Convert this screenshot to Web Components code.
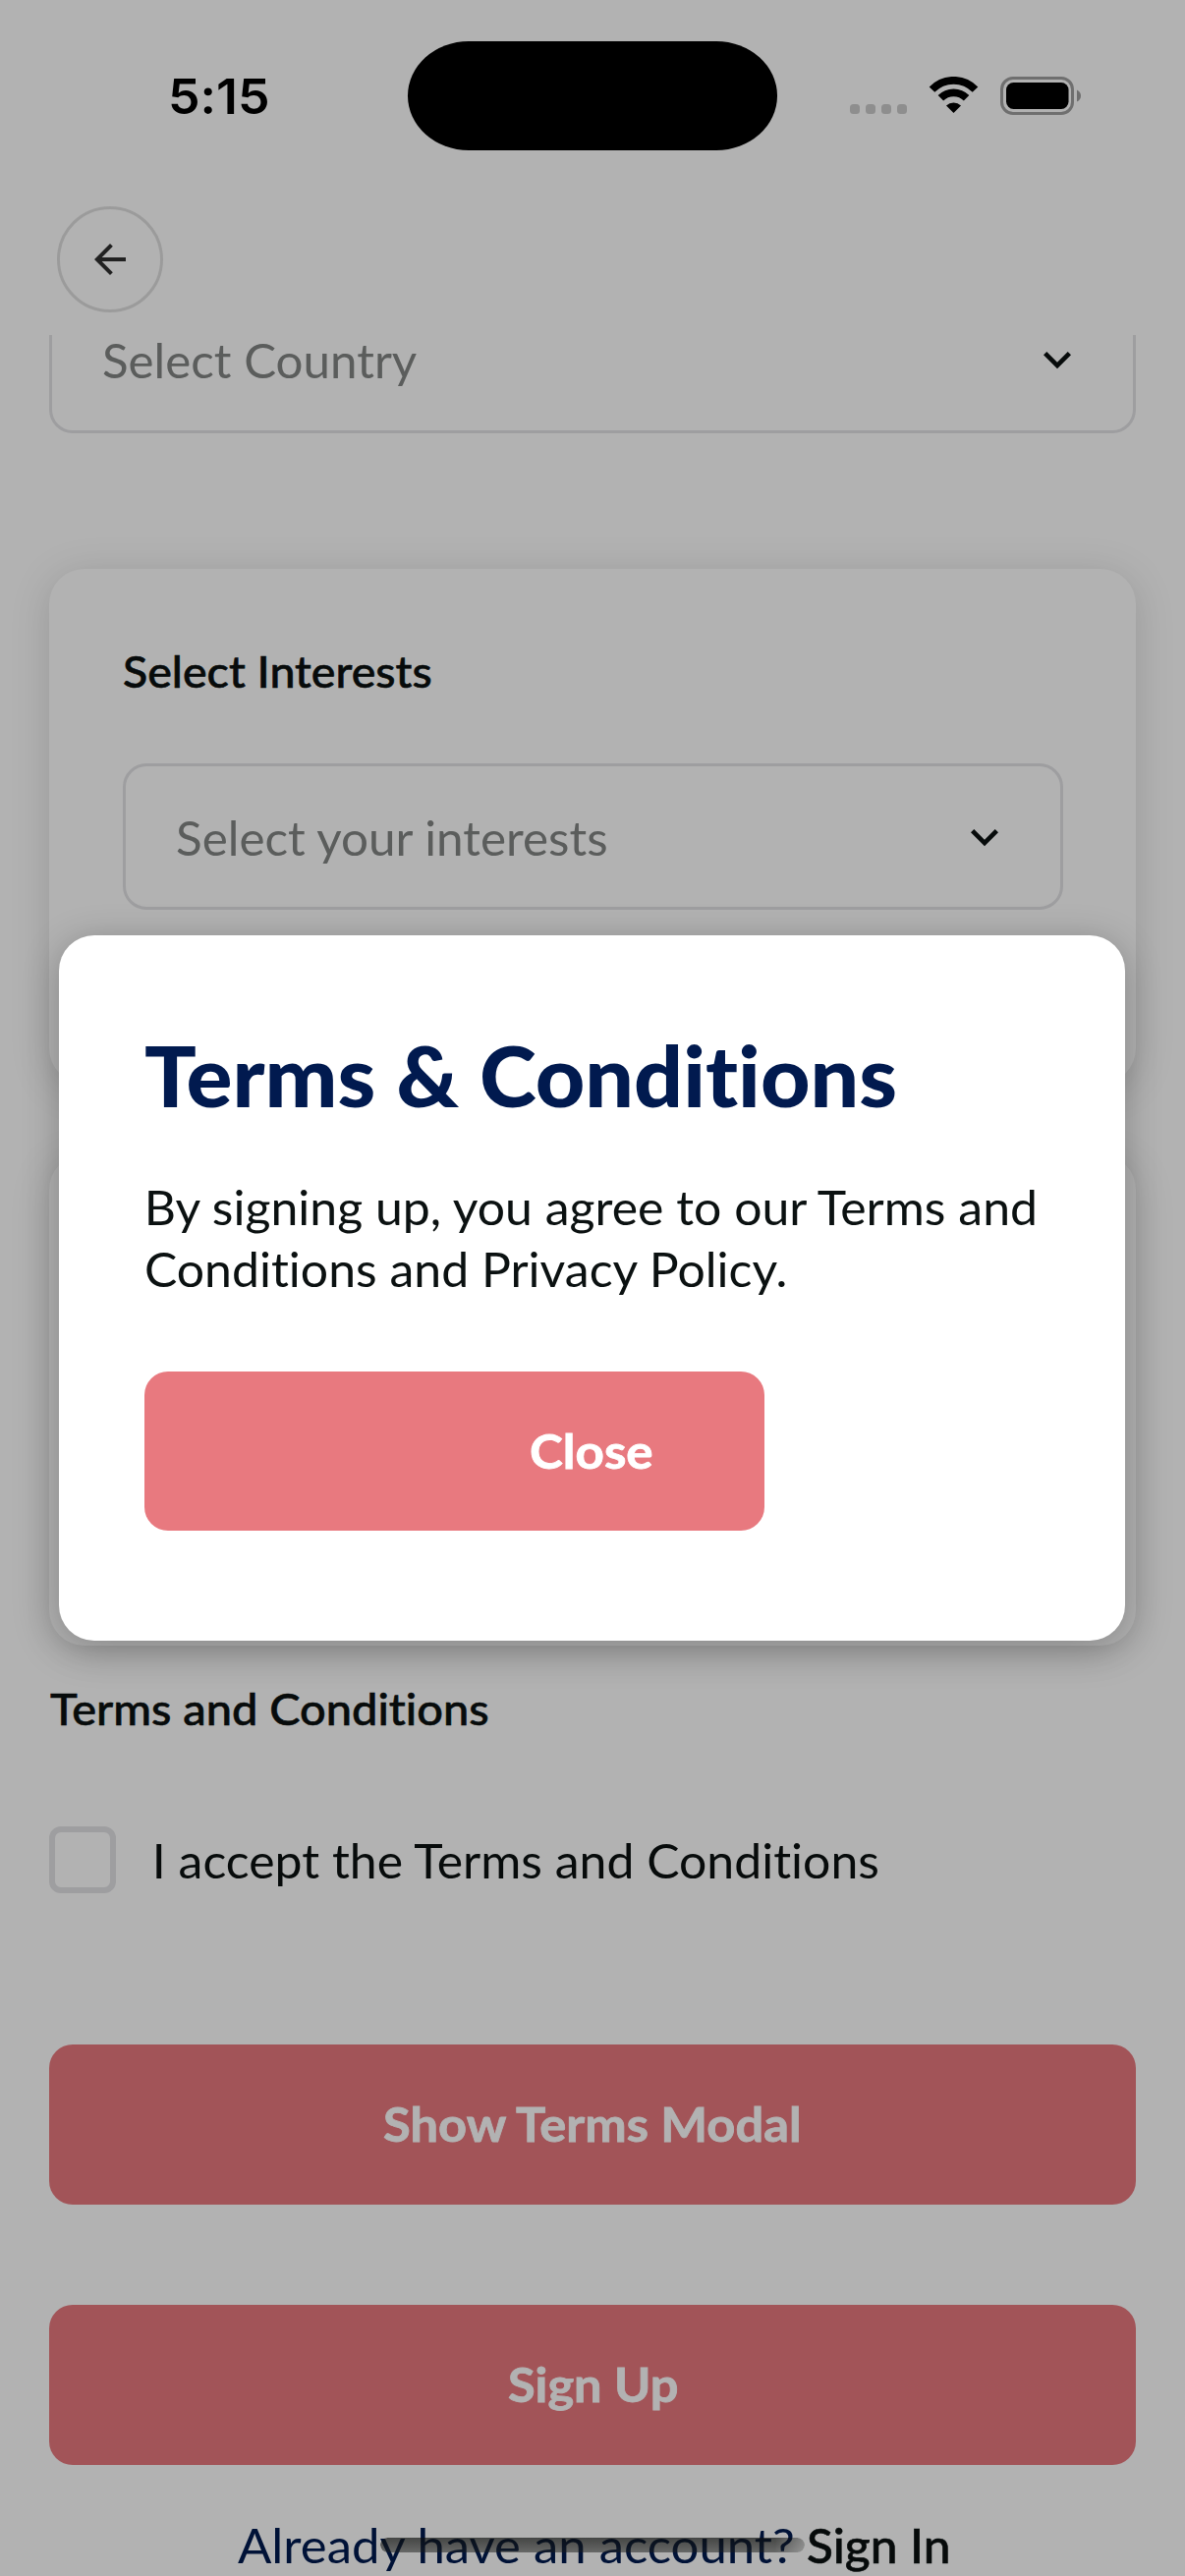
<!DOCTYPE html>
<html lang="en">
<head>
<meta charset="utf-8">
<title>Sign Up</title>
<style>
html,body{margin:0;padding:0;background:#fff}
body{width:1206px;height:2622px;overflow:hidden;font-family:Lato,"Open Sans",sans-serif}
</style>
</head>
<body>
<signup-screen></signup-screen>
<script>
const define = (name, html, init) => customElements.define(name, class extends HTMLElement {
  connectedCallback() {
    if (this.shadowRoot) return;
    const t = document.createElement('template');
    t.innerHTML = html;
    this.attachShadow({mode: 'open'}).append(t.content.cloneNode(true));
    if (init) init(this, this.shadowRoot);
  }
});

/* One line of type whose drawn width is set by the "ink" attribute. */
const pen = document.createElement('canvas').getContext('2d');
define('type-line', `<style>
:host{display:block;flex:none;height:1em;line-height:1em;font-size:48px;white-space:nowrap}
span{display:inline-block;transform-origin:0 0;line-height:1em;letter-spacing:.01px;font-variant-ligatures:none}
</style><span><slot></slot></span>`, (el, root) => {
  const cs = getComputedStyle(el), span = root.querySelector('span');
  pen.font = cs.fontWeight + ' ' + cs.fontSize + ' ' + cs.fontFamily;
  pen.letterSpacing = '0.01px';
  const m = pen.measureText(el.textContent);
  const ink = +el.getAttribute('ink');
  const s = ink / (m.actualBoundingBoxRight + m.actualBoundingBoxLeft);
  el.style.width = ink + 'px';
  span.style.transform = `translate(${m.actualBoundingBoxLeft * s}px,1px) scaleX(${s})`;
});

define('status-bar', `<style>
:host{display:flex;align-items:center;height:194px;flex:none;color:#000}
.side{flex:none;width:415px;display:flex;align-items:center;box-sizing:border-box}
.time{padding-left:174px}
.time type-line{font:600 50px Inter,sans-serif;line-height:1em}
.island{width:376px;height:111px;background:#000;border-radius:62px/55.5px;flex:none}
.right{padding-left:74px}
.dots{display:flex;gap:6px;padding-top:28px}
.dots i{width:10px;height:10px;border-radius:3.5px;background:#ccc}
svg{display:block}
.wifi{margin-left:22px}.bat{margin-left:22px}
</style>
<div class="side time"><type-line ink="98">5:15</type-line></div>
<div class="island"></div>
<div class="side right">
 <div class="dots"><i></i><i></i><i></i><i></i></div>
 <svg class="wifi" width="51" height="38" viewBox="0 0 51 38"><g fill="none" stroke="#000" stroke-width="7.7"><path d="M3.5 13.2A30.4 30.4 0 0 1 47.5 13.2"/><path d="M12.4 21.8A18.4 18.4 0 0 1 38.6 21.8"/></g><path d="M25.5 37L18 29.4A10.9 10.9 0 0 1 33 29.4Z"/></svg>
 <svg class="bat" width="83" height="39" viewBox="0 0 83 39"><rect x="1.5" y="1.5" width="72" height="36" rx="11.5" fill="none" stroke="#9f9f9f" stroke-width="3"/><rect x="6" y="6" width="63.5" height="27" rx="7.5"/><path d="M78 13.5Q82 15.5 82 19.5T78 25.5Z" fill="#9f9f9f"/></svg>
</div>`);

define('back-button', `<style>
:host{display:flex;align-items:center;justify-content:center;box-sizing:border-box;width:108px;height:108px;border:3px solid #dfdfdf;border-radius:50%}
svg{display:block}
</style><svg width="48" height="48" viewBox="0 0 24 24" fill="#303030"><path d="M20 11H7.83l5.59-5.59L12 4l-8 8 8 8 1.41-1.41L7.83 13H20z"/></svg>`);

/* "scrolled" leaves only the part below the header. */
define('select-field', `<style>
:host{display:flex;align-items:center;justify-content:space-between;box-sizing:border-box;height:149px;border:3px solid #e2e2e5;border-radius:24px;padding:0 49px 0 52px;color:#838685;background:#fff}
:host([scrolled]){height:100px;border-top:0;border-radius:0 0 24px 24px;padding-bottom:47px}
svg{display:block}
</style><slot></slot><svg width="56" height="56" viewBox="0 0 24 24" fill="#0b1111"><path d="M7.41 8.58L12 13.17L16.59 8.58L18 10L12 16L6 10Z"/></svg>`);

define('form-card', `<style>
:host{display:block;box-sizing:border-box;background:#fff;border-radius:36px;padding:81px 74px 0 75px;box-shadow:0 6px 40px rgba(0,0,0,.15)}
</style><slot></slot>`);

define('check-box', `<style>
:host{display:flex;align-items:center;gap:41px;height:68px;color:#0b1111}
i{box-sizing:border-box;width:68px;height:68px;border:6px solid #e2e2e5;border-radius:12px}
</style><i></i><slot></slot>`);

define('action-button', `<style>
:host{display:flex;align-items:center;justify-content:center;box-sizing:border-box;height:163px;padding-bottom:4px;background:#e8797f;border-radius:24px;color:#fff;font-weight:700;-webkit-text-stroke:.8px currentColor}
</style><slot></slot>`);

define('terms-dialog', `<style>
:host{position:absolute;inset:0;display:flex;align-items:center;justify-content:center;background:rgba(0,0,0,.3)}
section{box-sizing:border-box;width:1085px;height:718px;margin-right:1px;background:#fff;border-radius:36px;padding:97px 87px 0;box-shadow:0 6px 36px rgba(0,0,0,.25)}
h1{margin:0 0 67px .5px;font-weight:900;color:#011a4f}
h1 type-line{font-size:86px;height:88px;line-height:88px}
.copy{display:flex;flex-direction:column;gap:15px;margin:0 0 80.5px 2px;color:#0b1111}
.copy type-line:first-child{margin-left:2px}
action-button{width:631px;height:162px;justify-content:flex-start;padding-left:393px;padding-bottom:2px}
</style><section>
<h1><type-line ink="763">Terms &amp; Conditions</type-line></h1>
<div class="copy"><type-line ink="907">By signing up, you agree to our Terms and</type-line><type-line ink="651">Conditions and Privacy Policy.</type-line></div>
<action-button><type-line ink="124">Close</type-line></action-button>
</section>`);

define('home-indicator', `<style>
:host{position:absolute;left:387px;top:2583px;width:432px;height:15px;border-radius:8px;background:linear-gradient(rgba(12,14,12,.66),rgba(28,30,28,.5));-webkit-mask-image:linear-gradient(90deg,#000 93%,rgba(0,0,0,.4))}
</style>`);

define('signup-screen', `<style>
:host{position:relative;display:flex;flex-direction:column;width:1206px;height:2622px;overflow:hidden;background:#fff;color:#0b1111}
header{height:147px;padding:16px 58px 0;box-sizing:border-box;flex:none}
main{flex:1;min-height:0;padding:0 50px;display:flex;flex-direction:column}
main>*{flex:none}
.interests{margin-top:138px;height:524px}
.extra{margin-top:72px;height:500px}
.label{font-size:45px;font-weight:500;-webkit-text-stroke:.6px currentColor}
form-card .label{margin:0 0 72px .5px}
.terms{margin:41px 0 98px .5px}
.show{margin-top:154px}
.submit{margin-top:102px}
footer{display:flex;justify-content:center;gap:14px;margin-top:57px;color:#011a4f}
footer .in{color:#0b1111;font-weight:500;-webkit-text-stroke:.6px currentColor}
</style>
<status-bar></status-bar>
<header><back-button></back-button></header>
<main>
<select-field scrolled><type-line ink="319.5">Select Country</type-line></select-field>
<form-card class="interests"><type-line class="label" ink="312">Select Interests</type-line><select-field><type-line ink="439">Select your interests</type-line></select-field></form-card>
<form-card class="extra"></form-card>
<type-line class="label terms" ink="445">Terms and Conditions</type-line>
<check-box><type-line ink="735.5">I accept the Terms and Conditions</type-line></check-box>
<action-button class="show"><type-line ink="424">Show Terms Modal</type-line></action-button>
<action-button class="submit"><type-line ink="171">Sign Up</type-line></action-button>
<footer><type-line ink="566.5">Already have an account?</type-line><type-line class="in" ink="142.5">Sign In</type-line></footer>
</main>
<terms-dialog></terms-dialog>
<home-indicator></home-indicator>`);
</script>
</body>
</html>
